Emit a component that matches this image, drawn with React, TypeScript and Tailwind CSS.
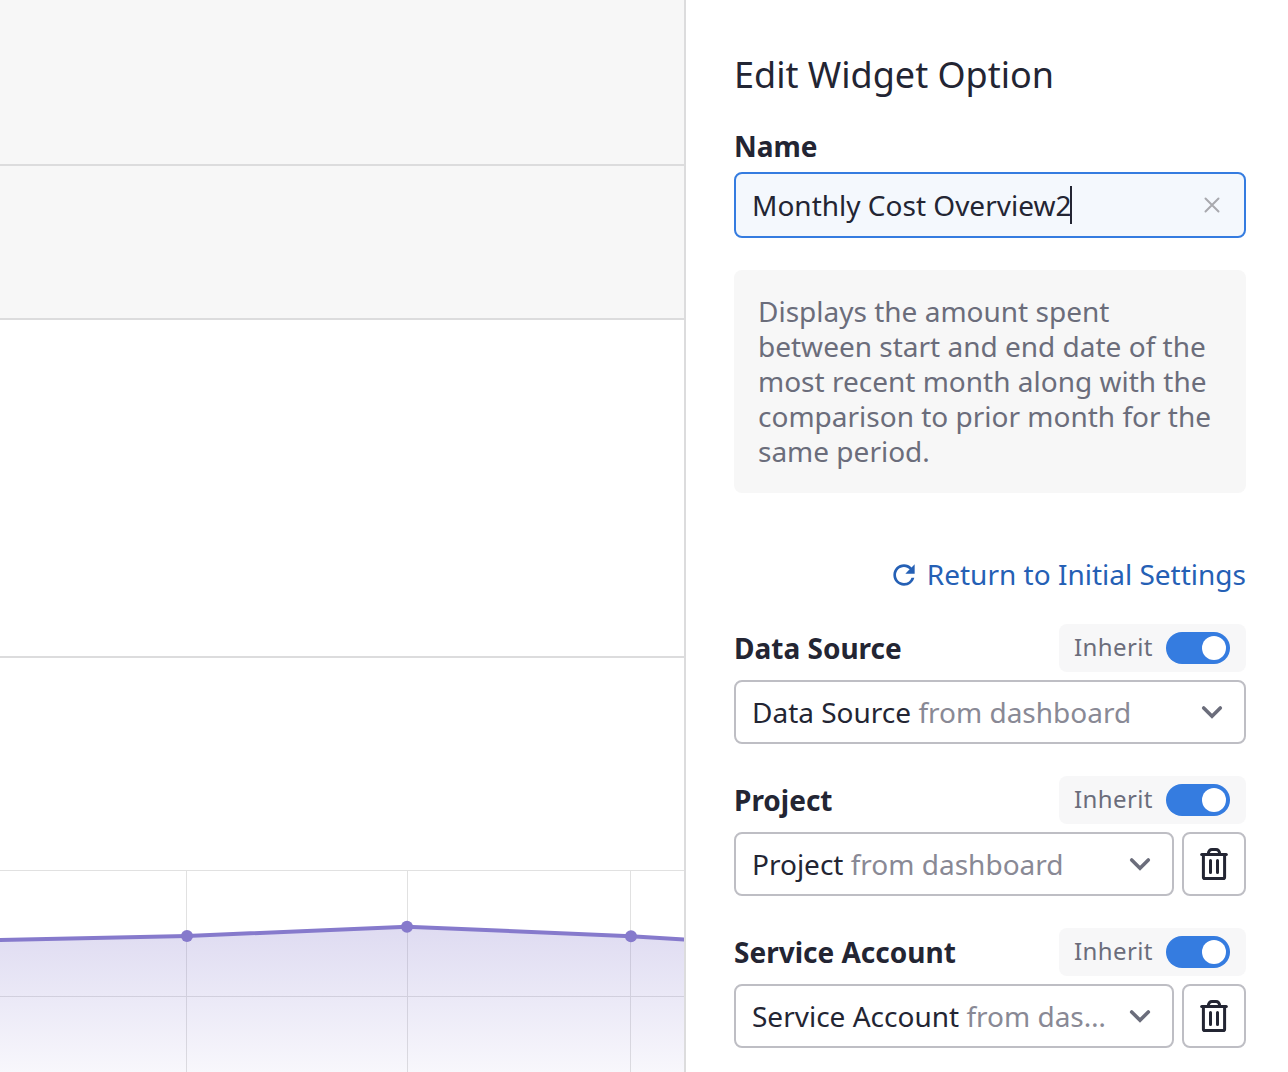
import React from "react";

function Chevron() {
  return (
    <svg className="h-8 w-8 shrink-0" viewBox="0 0 32 32" fill="none">
      <path d="M7.7 12 16 20.2 24.3 12" stroke="#6b6d7b" strokeWidth="3.6" strokeLinecap="round" />
    </svg>
  );
}

function Trash() {
  return (
    <svg className="h-8 w-8" viewBox="0 0 32 32" fill="none" stroke="#232533" strokeWidth="3" strokeLinejoin="round" strokeLinecap="round">
      <path d="M5.4 7V29.2q0 1.3 1.3 1.3h18.6q1.3 0 1.3-1.3V7" />
      <path d="M3.7 6.5h24.6" />
      <path d="M10.2 6C10.6 3 12 1.5 14 1.5h4c2 0 3.4 1.5 3.8 4.5" strokeLinecap="butt" />
      <path d="M12.5 12.5v12M19.5 12.5v12" />
    </svg>
  );
}

function Refresh() {
  return (
    <svg className="h-8 w-8" viewBox="0 0 24 24" fill="#2560b5">
      <path d="M17.65 6.35A7.958 7.958 0 0 0 12 4c-4.42 0-7.99 3.58-7.99 8s3.57 8 7.99 8c3.73 0 6.84-2.55 7.73-6h-2.08A5.99 5.99 0 0 1 12 18c-3.31 0-6-2.69-6-6s2.69-6 6-6c1.66 0 3.14.69 4.22 1.78L13 11h7V4l-2.35 2.35z" />
    </svg>
  );
}

function CostChart() {
  return (
    <svg className="block h-[414px] w-[684px]" viewBox="0 658 684 414">
      <defs>
        <linearGradient id="area" gradientUnits="userSpaceOnUse" x1="0" y1="926" x2="0" y2="1072">
          <stop offset="0" stopColor="#867acc" stopOpacity="0.27" />
          <stop offset="1" stopColor="#867acc" stopOpacity="0.06" />
        </linearGradient>
      </defs>
      <path d="M0 870.5H684M0 996.5H684M186.5 870V1072M407.5 870V1072M630.5 870V1072" stroke="#e1e1e1" />
      <path d="M0 940 187 936 407 926.7 631 936.2 684 939.5V1072H0Z" fill="url(#area)" />
      <path d="M-4 940.1 187 936 407 926.7 631 936.2 688 939.7" fill="none" stroke="#867acc" strokeWidth="4" />
      <g fill="#867acc">
        <circle cx="187" cy="936" r="6" />
        <circle cx="407" cy="926.7" r="6" />
        <circle cx="631" cy="936.2" r="6" />
      </g>
    </svg>
  );
}

function Field({ label, removable = false }: { label: string; removable?: boolean }) {
  return (
    <section className="mb-8">
      <div className="flex h-12 items-center justify-between">
        <h2 className="text-[28px] leading-[35px] font-bold">{label}</h2>
        <div className="flex h-12 w-[187px] items-center justify-between rounded-lg bg-[#f7f7f8] pr-4 pl-[15px] text-2xl text-[#6b6d7b]">
          <span className="pb-0.5 leading-[30px] tracking-[0.4px]">Inherit</span>
          <button aria-label={`Inherit ${label}`} className="flex h-8 w-16 items-center justify-end rounded-full bg-[#357ce0] pr-1">
            <span className="h-6 w-6 rounded-full bg-white" />
          </button>
        </div>
      </div>
      <div className="mt-2 flex gap-2">
        <div className="flex h-16 min-w-0 flex-1 items-center rounded-lg border-2 border-[#bebec4] pr-4 pl-4">
          <p className="mr-4 min-w-0 flex-1 truncate text-[28px] leading-[40px] text-[#898995]">
            <span className="text-[#232533]">{label}</span> from dashboard
          </p>
          <Chevron />
        </div>
        {removable && (
          <button aria-label={`Remove ${label}`} className="flex h-16 w-16 shrink-0 items-center justify-center rounded-lg border-2 border-[#bebec4]">
            <Trash />
          </button>
        )}
      </div>
    </section>
  );
}

export default function App() {
  return (
    <div className="flex h-[1072px] w-[1288px] overflow-hidden bg-white font-['Noto_Sans',sans-serif] text-[#232533]">
      <main className="w-[684px] shrink-0">
        <div className="h-[166px] border-b-2 border-[#dcdcdd] bg-[#f7f7f7]" />
        <div className="h-[154px] border-b-2 border-[#dcdcdd] bg-[#f7f7f7]" />
        <div className="h-[338px] border-b-2 border-[#dcdcdd]" />
        <CostChart />
      </main>
      <aside className="w-[604px] shrink-0 border-l-2 border-[#dcdcdd] pt-[52px] pr-[42px] pl-12">
        <h1 className="text-4xl leading-[45px]">Edit Widget Option</h1>
        <h2 className="mt-8 text-[28px] leading-[35px] font-bold">Name</h2>
        <div className="mt-2 flex h-[66px] items-center rounded-lg border-2 border-[#357ce0] bg-[#f4f8fd] px-4">
          <span className="text-[28px] leading-[40px]">Monthly Cost Overview2</span>
          <span className="-ml-px h-[38px] w-0.5 bg-[#232533]" />
          <svg className="ml-auto h-8 w-8" viewBox="0 0 32 32" fill="none">
            <path d="m9.5 9.5 13 13m0-13-13 13" stroke="#a8a9ae" strokeWidth="2" strokeLinecap="round" />
          </svg>
        </div>
        <p className="mt-8 h-[223px] rounded-lg bg-[#f7f7f7] p-6 text-[28px] leading-[35px] text-[#6b6d7b]">
          Displays the amount spent between start and end date of the most recent month along with the comparison to prior month for the same period.
        </p>
        <div className="mt-16 mb-8 flex h-[35px] items-center justify-end gap-[7px] text-[28px] leading-[35px] text-[#2560b5]">
          <Refresh />
          <span>Return to Initial Settings</span>
        </div>
        <Field label="Data Source" />
        <Field label="Project" removable />
        <Field label="Service Account" removable />
      </aside>
    </div>
  );
}
